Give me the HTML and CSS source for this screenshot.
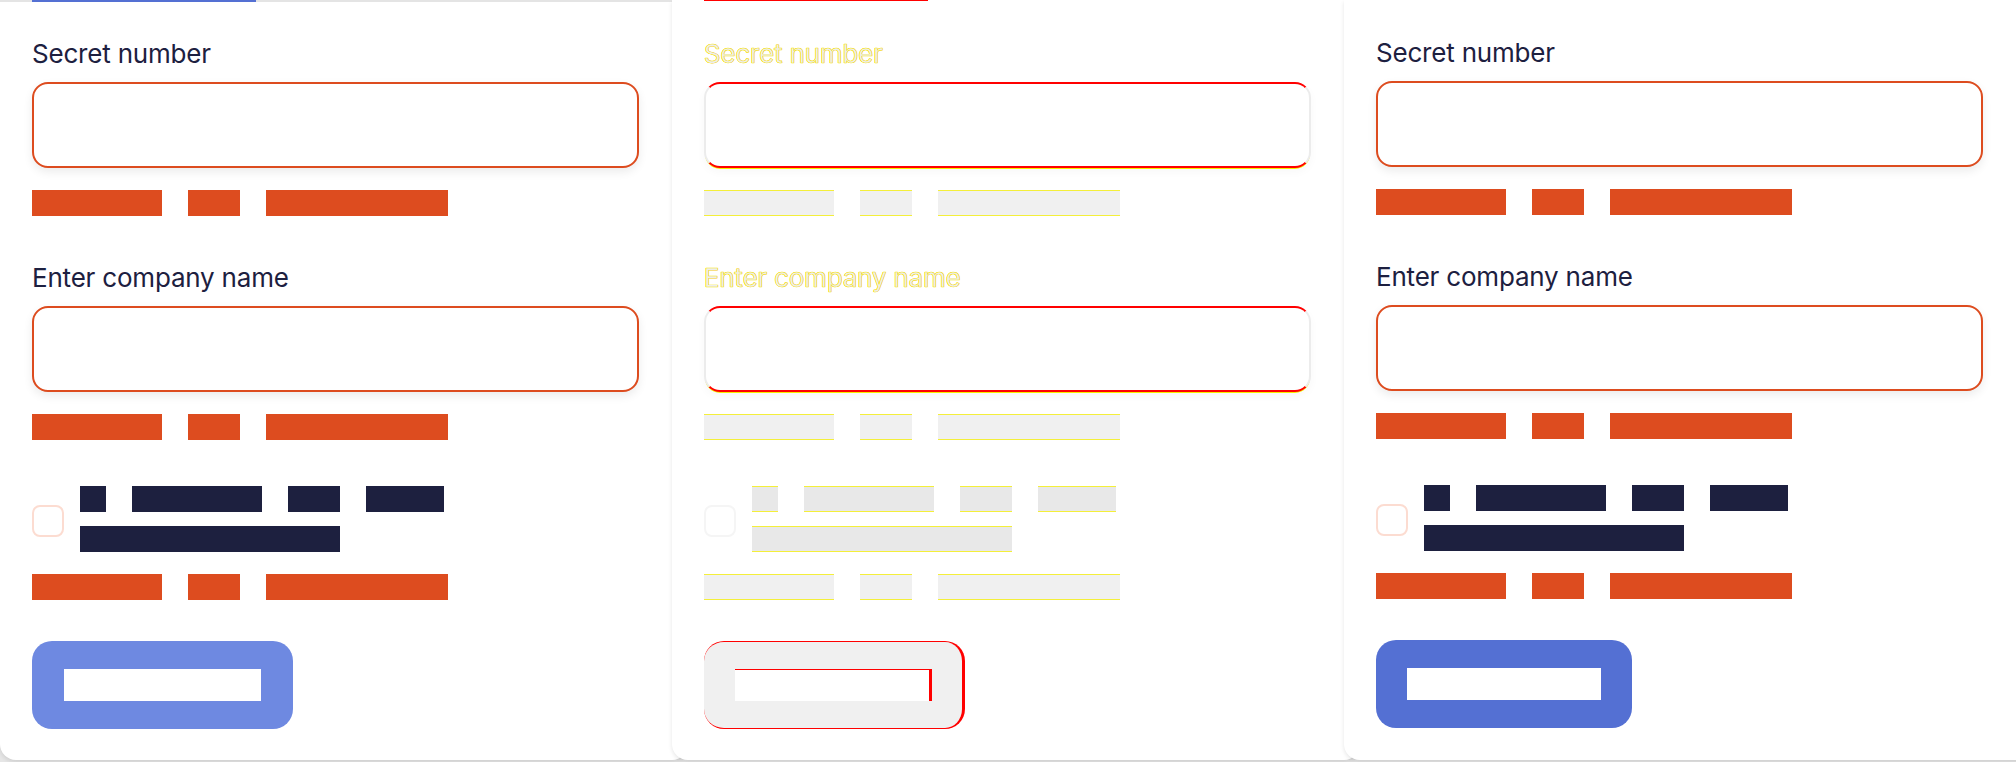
FILE: index.html
```html
<!DOCTYPE html>
<html lang="en">
<head>
<meta charset="utf-8">
<title>Form states</title>
<link rel="stylesheet" href="styles.css">
</head>
<body>
<div class="deck">
  <section class="card card-a">
    <div class="tabline"><span class="tab-ind"></span></div>
    <div class="form">
      <div class="field">
        <div class="label">Secret number</div>
        <div class="input"></div>
        <div class="err"><span class="w w10"></span><span class="w w4"></span><span class="w w14"></span></div>
      </div>
      <div class="field">
        <div class="label">Enter company name</div>
        <div class="input"></div>
        <div class="err"><span class="w w10"></span><span class="w w4"></span><span class="w w14"></span></div>
      </div>
      <div class="check">
        <span class="box"></span>
        <div class="check-text">
          <div class="line"><span class="t w2"></span><span class="t w10"></span><span class="t w4"></span><span class="t w6"></span></div>
          <div class="line"><span class="t w20"></span></div>
        </div>
      </div>
      <div class="err err-check"><span class="w w10"></span><span class="w w4"></span><span class="w w14"></span></div>
      <div class="btn"><span class="btn-label"></span></div>
    </div>
  </section>

  <section class="card card-b">
    <div class="tabline"><span class="tab-ind"></span></div>
    <div class="form">
      <div class="field">
        <div class="label">Secret number</div>
        <div class="input"></div>
        <div class="err"><span class="w w10"></span><span class="w w4"></span><span class="w w14"></span></div>
      </div>
      <div class="field">
        <div class="label">Enter company name</div>
        <div class="input"></div>
        <div class="err"><span class="w w10"></span><span class="w w4"></span><span class="w w14"></span></div>
      </div>
      <div class="check">
        <span class="box"></span>
        <div class="check-text">
          <div class="line"><span class="t w2"></span><span class="t w10"></span><span class="t w4"></span><span class="t w6"></span></div>
          <div class="line"><span class="t w20"></span></div>
        </div>
      </div>
      <div class="err err-check"><span class="w w10"></span><span class="w w4"></span><span class="w w14"></span></div>
      <div class="btn"><span class="btn-label"></span></div>
    </div>
  </section>

  <section class="card card-c">
    <div class="tabline"><span class="tab-ind"></span></div>
    <div class="form">
      <div class="field">
        <div class="label">Secret number</div>
        <div class="input"></div>
        <div class="err"><span class="w w10"></span><span class="w w4"></span><span class="w w14"></span></div>
      </div>
      <div class="field">
        <div class="label">Enter company name</div>
        <div class="input"></div>
        <div class="err"><span class="w w10"></span><span class="w w4"></span><span class="w w14"></span></div>
      </div>
      <div class="check">
        <span class="box"></span>
        <div class="check-text">
          <div class="line"><span class="t w2"></span><span class="t w10"></span><span class="t w4"></span><span class="t w6"></span></div>
          <div class="line"><span class="t w20"></span></div>
        </div>
      </div>
      <div class="err err-check"><span class="w w10"></span><span class="w w4"></span><span class="w w14"></span></div>
      <div class="btn"><span class="btn-label"></span></div>
    </div>
  </section>
</div>
</body>
</html>
```

FILE: styles.css
```css
* { box-sizing: border-box; }

html, body {
  margin: 0;
  padding: 0;
  height: 762px;
  overflow: hidden;
  background: #e6e6e6;
  font-family: Inter, "Noto Sans", "Liberation Sans", sans-serif;
}

.deck {
  display: flex;
  align-items: flex-start;
  height: 762px;
}

.card {
  flex: 0 0 688px;
  width: 688px;
  height: 760px;
  margin-right: -16px;
  background: #ffffff;
  border-radius: 0 0 16px 16px;
  box-shadow: 0 2px 4px rgba(0, 0, 0, 0.10);
}

.tabline {
  height: 2px;
  width: 672px;
  padding-left: 32px;
}

.tab-ind {
  display: block;
  width: 224px;
  height: 2px;
}

.card-a .tabline { background: #e4e4e4; }
.card-a .tab-ind { background: #5470d3; }
.card-b .tab-ind { height: 1px; background: #ff0000; }

.form {
  display: flex;
  flex-direction: column;
  align-items: flex-start;
  padding: 36px 32px 0 32px;
}

.field {
  display: flex;
  flex-direction: column;
  align-items: flex-start;
  margin-bottom: 46px;
}

.label {
  font-size: 26px;
  line-height: 32px;
  color: #1d2040;
  letter-spacing: -0.2px;
  margin-bottom: 12px;
}

.input {
  width: 607px;
  height: 86px;
  border: 2px solid #dd4c1f;
  border-radius: 16px;
  background: #fff;
  box-shadow: 0 4px 10px rgba(0, 0, 0, 0.08);
  margin-bottom: 22px;
}

.err {
  display: flex;
  gap: 26px;
  height: 26px;
}

.w, .t {
  display: block;
  height: 26px;
}
.w { background: #dd4c1f; }
.t { background: #1d203f; }

.w2 { width: 26px; }
.w4 { width: 52px; }
.w6 { width: 78px; }
.w10 { width: 130px; }
.w14 { width: 182px; }
.w20 { width: 260px; }

.check {
  display: flex;
  align-items: center;
  gap: 16px;
  margin-bottom: 22px;
}

.box {
  display: block;
  width: 32px;
  height: 32px;
  margin-top: 3px;
  border: 2px solid #fcdcd1;
  border-radius: 8px;
  background: #fff;
}

.check-text {
  display: flex;
  flex-direction: column;
  gap: 14px;
}

.line {
  display: flex;
  gap: 26px;
}

.err-check { margin-bottom: 41px; }

.btn {
  display: flex;
  padding: 28px 32px;
  width: 261px;
  height: 88px;
  border-radius: 20px;
  background: #6e89e1;
}

.btn-label {
  display: block;
  width: 197px;
  height: 32px;
  background: #ffffff;
}

/* third panel: normal state */
.card-c .form { padding-top: 35px; }
.card-c .btn {
  background: #5470d3;
  width: 256px;
  padding: 28px 31px;
}
.card-c .btn-label { width: 194px; }

/* second panel: ghost / diff rendering */
.card-b .label {
  color: #ededed;
  -webkit-text-stroke: 0.4px #f7e800;
  text-shadow: -0.5px 0 0 #f7e800, 0 0 0.4px #ff2a00;
}
.card-b .input {
  border-color: #ececec;
  border-top: 2px solid #ff0000;
  border-bottom: 2px solid #ff0000;
  box-shadow: 0 2px 0 -1px #f5f000, 0 4px 10px rgba(0, 0, 0, 0.03);
}
.card-b .w {
  background: #f0f0f0;
  border-top: 1px solid #f4ef3a;
  border-bottom: 1px solid #f4ef3a;
}
.card-b .t {
  background: #e8e8e8;
  border-top: 1px solid #f4ef3a;
  border-bottom: 1px solid #f4ef3a;
}
.card-b .box { border-color: #f5f5f5; }
.card-b .btn {
  background: #f0f0f0;
  border-top: 1px solid #ff0000;
  border-bottom: 1px solid #ff0000;
  border-right: 3px solid #ff0000;
  padding: 27px 29px 27px 31px;
}
.card-b .btn-label {
  width: 197px;
  border-top: 1px solid #ff0000;
  border-right: 3px solid #ff0000;
}
```
